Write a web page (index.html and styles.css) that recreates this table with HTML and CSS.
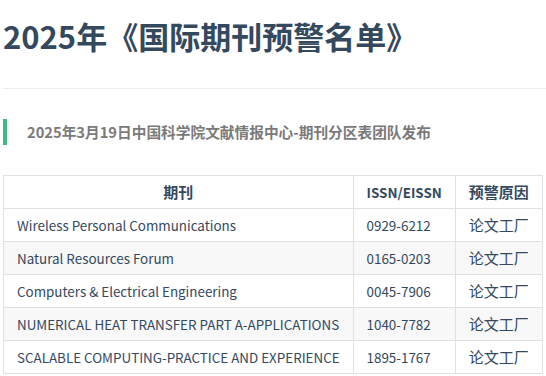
FILE: index.html
```html
<!DOCTYPE html>
<html lang="zh-CN">
<head>
<meta charset="utf-8">
<title>2025年《国际期刊预警名单》</title>
<link rel="stylesheet" href="styles.css">
</head>
<body>
<main class="page">
  <header class="page-head">
    <h1 class="title">2025年《国际期刊预警名单》</h1>
  </header>
  <blockquote class="note">2025年3月19日中国科学院文献情报中心-期刊分区表团队发布</blockquote>
  <table class="list">
    <thead>
      <tr><th>期刊</th><th class="latin">ISSN/EISSN</th><th>预警原因</th></tr>
    </thead>
    <tbody>
      <tr><td class="latin">Wireless Personal Communications</td><td class="latin">0929-6212</td><td>论文工厂</td></tr>
      <tr><td class="latin">Natural Resources Forum</td><td class="latin">0165-0203</td><td>论文工厂</td></tr>
      <tr><td class="latin">Computers &amp; Electrical Engineering</td><td class="latin">0045-7906</td><td>论文工厂</td></tr>
      <tr><td class="latin">NUMERICAL HEAT TRANSFER PART A-APPLICATIONS</td><td class="latin">1040-7782</td><td>论文工厂</td></tr>
      <tr><td class="latin">SCALABLE COMPUTING-PRACTICE AND EXPERIENCE</td><td class="latin">1895-1767</td><td>论文工厂</td></tr>
    </tbody>
  </table>
</main>
</body>
</html>
```

FILE: styles.css
```css
html, body {
  margin: 0;
  padding: 0;
  background: #fff;
}
body {
  font-family: "Noto Sans CJK SC", "Noto Sans", sans-serif;
  color: #2c3e50;
}
.page {
  padding: 0 0 0 3px;
}
.page-head {
  padding: 16px 0 32px;
  border-bottom: 1px solid #eaecef;
}
.title {
  margin: 0;
  font-size: 31px;
  line-height: 40px;
  font-weight: 700;
  color: #34495e;
  white-space: nowrap;
}
.note {
  margin: 30px 0 30px;
  padding: 0 0 0 20px;
  border-left: 4px solid #42b983;
  font-size: 14.7px;
  line-height: 26px;
  font-weight: 700;
  color: #7a7a7a;
  white-space: nowrap;
}
.list {
  border-collapse: collapse;
  font-size: 15px;
  line-height: 22px;
  color: #34495e;
}
.list th, .list td {
  border: 1px solid #dfe2e5;
  padding: 5px 13px;
  white-space: nowrap;
}
.list .latin {
  font-size: 13.4px;
}
.list th {
  font-weight: 700;
  text-align: center;
}
.list td {
  text-align: left;
}
.list tbody tr:nth-child(2n) {
  background: #f8f8f8;
}
```
